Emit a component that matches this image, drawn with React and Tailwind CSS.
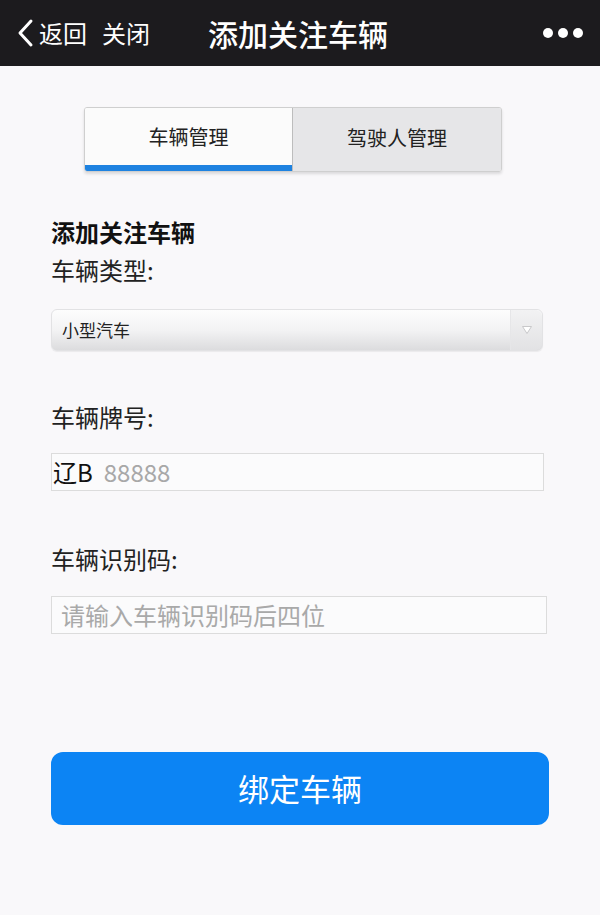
import React from "react";

const font = { fontFamily: '"Noto Sans CJK SC", "Noto Sans", sans-serif' };

const Field = ({ label, children, className = "" }) => (
  <div className={className}>
    <p className="text-[24px] leading-[32px] text-[#222]">{label}</p>
    {children}
  </div>
);

export default function App() {
  return (
    <div
      className="w-[600px] h-[915px] bg-[#f9f8fa] flex flex-col"
      style={font}
    >
      <div className="h-[66px] bg-[#1c1b1e] flex items-center text-white relative">
        <div className="flex items-center pl-[14px]">
          <svg width="22" height="30" viewBox="0 0 22 30">
            <path
              d="M17 3 L6 15 L17 27"
              fill="none"
              stroke="white"
              strokeWidth="3"
              strokeLinecap="round"
              strokeLinejoin="round"
            />
          </svg>
          <span className="text-[24px] ml-[3px]">返回</span>
          <span className="text-[24px] ml-[15px]">关闭</span>
        </div>
        <h1 className="absolute left-[208px] text-[30px] font-medium">
          添加关注车辆
        </h1>
        <div className="ml-auto mr-[17px] flex gap-[5px]">
          <span className="w-[10px] h-[10px] rounded-full bg-white" />
          <span className="w-[10px] h-[10px] rounded-full bg-white" />
          <span className="w-[10px] h-[10px] rounded-full bg-white" />
        </div>
      </div>

      <div className="mt-[41px] ml-[84px] flex w-[418px] h-[65px] rounded-[3px] border border-[#cfcfcf] shadow-[0_2px_3px_rgba(0,0,0,0.12)] overflow-hidden">
        <div className="w-[208px] bg-[#fbfbfb] flex flex-col border-r border-[#bdbdbd]">
          <div className="flex-1 flex items-center justify-center text-[20px] text-[#222]">
            车辆管理
          </div>
          <div className="h-[6px] bg-[#1e82e0]" />
        </div>
        <div className="flex-1 bg-[#e6e6e8] flex items-center justify-center text-[20px] text-[#222] pb-[4px]">
          驾驶人管理
        </div>
      </div>

      <div className="px-[51px] mt-[44px]">
        <h2 className="text-[24px] leading-[32px] font-bold text-[#111]">
          添加关注车辆
        </h2>
        <Field label="车辆类型:" className="mt-[6px]">
          <div className="mt-[23px] h-[42px] w-[492px] rounded-[6px] border border-[#e2e2e4] bg-gradient-to-b from-[#fdfdfd] via-[#f3f3f4] to-[#dcdcde] flex items-center shadow-[0_1px_1px_rgba(0,0,0,0.06)]">
            <span className="pl-[10px] text-[17px] text-[#222] flex-1">
              小型汽车
            </span>
            <div className="w-[32px] h-full border-l border-[#e6e6e8] bg-gradient-to-b from-[#f2f2f3] to-[#e2e2e4] rounded-r-[6px] flex items-center justify-center">
              <svg width="12" height="10" viewBox="0 0 12 10">
                <path
                  d="M1.5 1.5 L10.5 1.5 L6 8.5 Z"
                  fill="white"
                  stroke="#c8c8ca"
                  strokeWidth="1"
                  strokeLinejoin="round"
                />
              </svg>
            </div>
          </div>
        </Field>

        <Field label="车辆牌号:" className="mt-[50px]">
          <div className="mt-[20px] h-[38px] w-[493px] border border-[#dcdcdc] bg-[#fbfbfc] flex items-center text-[24px]">
            <span className="text-[#111] pl-[1px]">辽B</span>
            <span className="text-[#a8a8a8] ml-[11px]">88888</span>
          </div>
        </Field>

        <Field label="车辆识别码:" className="mt-[52px]">
          <div className="mt-[21px] h-[38px] w-[496px] border border-[#dcdcdc] bg-[#fbfbfc] flex items-center">
            <span className="text-[24px] text-[#a9a9a9] pl-[9px]">
              请输入车辆识别码后四位
            </span>
          </div>
        </Field>

        <button className="mt-[118px] w-[498px] h-[73px] rounded-[12px] bg-[#0c84f4] text-white text-[31px] flex items-center justify-center">
          绑定车辆
        </button>
      </div>
    </div>
  );
}
